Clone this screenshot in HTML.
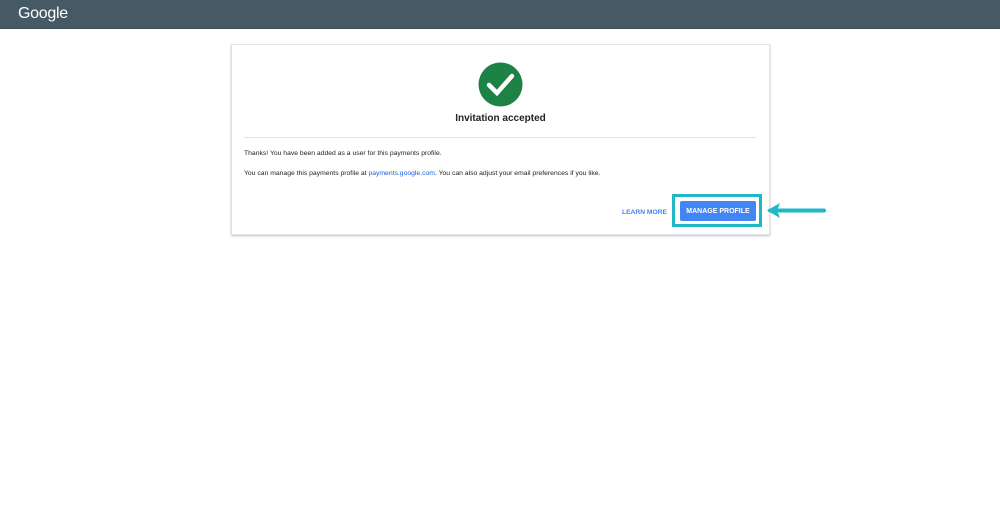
<!DOCTYPE html><html><head><style>
body{margin:0;width:1000px;height:509px;background:#fff;font-family:"Liberation Sans",sans-serif;position:relative;overflow:hidden}
.h{position:absolute;left:0;top:0;width:1000px;height:28px;background:#455a64;border-bottom:1px solid #3a4c55}
.logo{position:absolute;left:18px;top:5px;color:#fff;font-size:16px;letter-spacing:-0.3px}
.card{position:absolute;left:231px;top:44px;width:537px;height:189px;background:#fff;border:1px solid #e3e3e3;box-shadow:0 1px 2px rgba(0,0,0,.25)}
.t{position:absolute;font-size:6.8px;color:#222}
</style></head><body>
<div class="h"><div class="logo">Google</div></div>
<div class="card">
<svg style="position:absolute;left:246px;top:17px" width="45" height="45"><circle cx="22.5" cy="22.5" r="22" fill="#1e8145"/><path d="M11 23 L19 31 L34 14" stroke="#fff" stroke-width="4.5" fill="none" stroke-linecap="round"/></svg>
<div style="position:absolute;left:0;width:537px;top:68px;text-align:center;font-size:10px;font-weight:bold;color:#222">Invitation accepted</div>
<div style="position:absolute;left:12px;top:92px;width:512px;height:1px;background:#e2e2e2"></div>
<div class="t" style="left:12px;top:105px">Thanks! You have been added as a user for this payments profile.</div>
<div class="t" style="left:12px;top:125px">You can manage this payments profile at <span style="color:#1a5fd6">payments.google.com</span>. You can also adjust your email preferences if you like.</div>
<div style="position:absolute;left:390px;top:164px;font-size:6.7px;font-weight:bold;color:#4285f4">LEARN MORE</div>
<div style="position:absolute;left:448px;top:156px;width:76px;height:20px;background:#4285f4;border-radius:2px;color:#fff;font-size:7px;font-weight:bold;text-align:center;line-height:21px">MANAGE PROFILE</div>
</div>
<div style="position:absolute;left:672px;top:194px;width:84px;height:27px;border:3px solid #1fb8c4"></div>
<svg style="position:absolute;left:764px;top:200px" width="64" height="22"><path d="M6 10.5 H60" stroke="#1fb8c4" stroke-width="4" stroke-linecap="round"/><path d="M3 10.5 L16 3 L13 10.5 L16 18 Z" fill="#1fb8c4"/></svg>
</body></html>
